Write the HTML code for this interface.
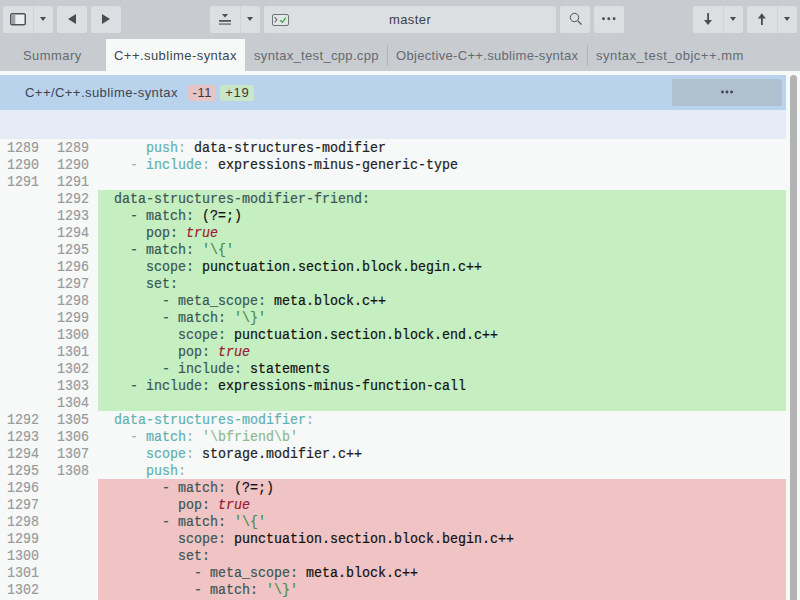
<!DOCTYPE html>
<html><head><meta charset="utf-8">
<style>
*{margin:0;padding:0;box-sizing:border-box}
html,body{width:800px;height:600px;overflow:hidden;background:#c8ccd0;font-family:"Liberation Sans",sans-serif}
.a{position:absolute}
.btn{position:absolute;top:6px;height:27px;background:#dcdfe2;border-radius:2px}
.sep{position:absolute;top:0;width:1px;height:27px;background:#d0d4d7}
.tri{position:absolute;width:0;height:0;border-left:3px solid transparent;border-right:3px solid transparent;border-top:4px solid #4a4d50}
.tab{position:absolute;top:40px;height:32px;font-size:13px;line-height:32px;color:#646a72;white-space:nowrap}
.tsep{position:absolute;top:45px;width:1px;height:21px;background:#aeb3b8}
#content{position:absolute;left:0;top:71px;width:800px;height:529px;background:#f7f9f9}
.code{position:absolute;left:0;width:786px;height:17px;font-family:"Liberation Mono",monospace;font-size:13.333px;line-height:17px;white-space:pre;-webkit-text-stroke:0.2px currentColor}
.ln1{position:absolute;left:7px;top:0;color:#9a9a9a;transform-origin:0 12px;transform:translateY(1px) scaleY(1.1)}
.ln2{position:absolute;left:57px;top:0;color:#9a9a9a;transform-origin:0 12px;transform:translateY(1px) scaleY(1.1)}
.tx{position:absolute;left:114px;top:0;color:#222;transform-origin:0 12px;transform:translateY(1px) scaleY(1.1)}
.bgG{position:absolute;left:98px;width:688px;background:#c6efc1}
.bgR{position:absolute;left:98px;width:688px;background:#f0c4c4}
/* context colours */
.k{color:#62b1b1}
.p{color:#93b5b5}
.s{color:#8fba8f}
.v{color:#222}
/* changed colours */
.K{color:#3a5757}
.S{color:#4f8c4c}
.T{color:#9a1a2e;font-style:italic}
.V{color:#111}
</style></head><body>

<!-- toolbar -->
<div class="btn" style="left:3px;width:50px">
  <div class="sep" style="left:30px"></div>
  <svg class="a" style="left:0;top:0" width="30" height="27"><rect x="7.75" y="7.75" width="14.5" height="11" rx="1.5" fill="#eceef0" stroke="#4f5256" stroke-width="1.5"/><rect x="8.5" y="8.5" width="3.8" height="9.5" fill="#9da1a6"/></svg>
  <div class="tri" style="left:37px;top:11px"></div>
</div>
<div class="btn" style="left:57px;width:30px">
  <svg class="a" style="left:0;top:0" width="30" height="27"><path d="M11 13 L19 8 L19 18 Z" fill="#4a4d50"/></svg>
</div>
<div class="btn" style="left:91px;width:30px">
  <svg class="a" style="left:0;top:0" width="30" height="27"><path d="M19 13 L11 8 L11 18 Z" fill="#4a4d50"/></svg>
</div>

<div class="btn" style="left:210px;width:50px">
  <div class="sep" style="left:30px"></div>
  <svg class="a" style="left:0;top:0" width="30" height="27"><path d="M12 8 L18 8 L15 11.4 Z" fill="#4a4d50"/><rect x="9" y="14" width="12" height="1.8" fill="#545658"/><rect x="9" y="17.2" width="12" height="1.8" fill="#87898c"/></svg>
  <div class="tri" style="left:37px;top:11px"></div>
</div>

<div class="btn" style="left:264px;width:292px">
  <div class="a" style="left:8px;top:8px;width:17px;height:12px;border:1px solid #6f7479;border-radius:2px;background:#e2e5e7"></div>
  <svg class="a" style="left:8px;top:8px" width="17" height="12"><path d="M2.6 3.2 L4.8 5.8 L2.6 8.4" stroke="#6a6e72" stroke-width="1.1" fill="none"/><path d="M8.2 6.2 L10.4 8.3 L13.8 3.6" stroke="#45a94b" stroke-width="1.4" fill="none"/></svg>
  <div class="a" style="left:125px;top:0;height:27px;line-height:27px;font-size:13px;color:#3c4148;letter-spacing:0.4px">master</div>
</div>
<div class="btn" style="left:560px;width:30px">
  <svg class="a" style="left:0;top:0" width="30" height="27"><circle cx="14.5" cy="11.5" r="4.2" stroke="#4f5256" stroke-width="1" fill="none"/><path d="M17.6 14.6 L21.5 18.5" stroke="#4f5256" stroke-width="1.2"/></svg>
</div>
<div class="btn" style="left:594px;width:30px">
  <svg class="a" style="left:0;top:0" width="30" height="27"><circle cx="9.5" cy="12.8" r="1.45" fill="#4a4d50"/><circle cx="14.8" cy="12.8" r="1.45" fill="#4a4d50"/><circle cx="20.1" cy="12.8" r="1.45" fill="#4a4d50"/></svg>
</div>

<div class="btn" style="left:693px;width:50px">
  <div class="sep" style="left:30px"></div>
  <svg class="a" style="left:0;top:0" width="30" height="27"><rect x="14.2" y="7" width="1.8" height="8" fill="#4a4d50"/><path d="M11 14 L19 14 L15 19 Z" fill="#4a4d50"/></svg>
  <div class="tri" style="left:37px;top:11px"></div>
</div>
<div class="btn" style="left:747px;width:50px">
  <div class="sep" style="left:30px"></div>
  <svg class="a" style="left:0;top:0" width="30" height="27"><rect x="14" y="12" width="1.8" height="7" fill="#4a4d50"/><path d="M10.8 12.5 L18.8 12.5 L14.8 7.3 Z" fill="#4a4d50"/></svg>
  <div class="tri" style="left:37px;top:11px"></div>
</div>

<!-- tabs -->
<div class="tab" style="left:23px;letter-spacing:0.42px">Summary</div>
<div class="a" style="left:106px;top:39px;width:139px;height:36px;background:#f7f9f9"></div>
<div class="tab" style="left:114px;color:#3e4650;letter-spacing:0.45px">C++.sublime-syntax</div>
<div class="tab" style="left:254px;letter-spacing:0.33px">syntax_test_cpp.cpp</div>
<div class="tsep" style="left:387px"></div>
<div class="tab" style="left:396px;letter-spacing:0.32px">Objective-C++.sublime-syntax</div>
<div class="tsep" style="left:587px"></div>
<div class="tab" style="left:596px;letter-spacing:0.5px">syntax_test_objc++.mm</div>

<!-- content -->
<div id="content"></div>
<div class="a" style="left:0;top:75px;width:786px;height:35px;background:#bad3ec"></div>
<div class="a" style="left:25px;top:75px;height:35px;line-height:35px;font-size:13px;color:#3a4550;letter-spacing:0.45px;white-space:nowrap">C++/C++.sublime-syntax</div>
<div class="a" style="left:188px;top:85px;width:28px;height:16px;background:#e6c4c7;border-radius:3px;font-size:13px;line-height:16px;text-align:center;color:#3a3a3a;letter-spacing:0.5px;text-indent:0.5px">-11</div>
<div class="a" style="left:220px;top:85px;width:34px;height:16px;background:#c9e6c7;border-radius:3px;font-size:13px;line-height:16px;text-align:center;color:#3a3a3a;letter-spacing:0.6px;text-indent:0.6px">+19</div>
<div class="a" style="left:672px;top:79px;width:110px;height:27px;background:#b1c0cf;border-radius:2px">
  <svg class="a" style="left:0;top:0" width="110" height="27"><circle cx="50.5" cy="13" r="1.4" fill="#3d4450"/><circle cx="55" cy="13" r="1.4" fill="#3d4450"/><circle cx="59.5" cy="13" r="1.4" fill="#3d4450"/></svg>
</div>
<div class="a" style="left:0;top:110px;width:786px;height:29px;background:#e5ecf6"></div>
<div class="a" style="left:790px;top:75px;width:7px;height:540px;background:#b3b3b3;border-radius:3.5px"></div>

<div class="bgG" style="top:190px;height:221px"></div>
<div class="bgR" style="top:479px;height:121px"></div>
<div class="code" style="top:139px"><span class="ln1">1289</span><span class="ln2">1289</span><span class="tx">    <span class="k">push</span><span class="p">:</span> <span class="v">data-structures-modifier</span></span></div>
<div class="code" style="top:156px"><span class="ln1">1290</span><span class="ln2">1290</span><span class="tx">  <span class="p">- </span><span class="k">include</span><span class="p">:</span> <span class="v">expressions-minus-generic-type</span></span></div>
<div class="code" style="top:173px"><span class="ln1">1291</span><span class="ln2">1291</span><span class="tx"></span></div>
<div class="code" style="top:190px"><span class="ln2">1292</span><span class="tx"><span class="K">data-structures-modifier-friend</span><span class="K">:</span></span></div>
<div class="code" style="top:207px"><span class="ln2">1293</span><span class="tx">  <span class="K">- </span><span class="K">match</span><span class="K">:</span> <span class="V">(?=;)</span></span></div>
<div class="code" style="top:224px"><span class="ln2">1294</span><span class="tx">    <span class="K">pop</span><span class="K">:</span> <span class="T">true</span></span></div>
<div class="code" style="top:241px"><span class="ln2">1295</span><span class="tx">  <span class="K">- </span><span class="K">match</span><span class="K">:</span> <span class="S">&#x27;\{&#x27;</span></span></div>
<div class="code" style="top:258px"><span class="ln2">1296</span><span class="tx">    <span class="K">scope</span><span class="K">:</span> <span class="V">punctuation.section.block.begin.c++</span></span></div>
<div class="code" style="top:275px"><span class="ln2">1297</span><span class="tx">    <span class="K">set</span><span class="K">:</span></span></div>
<div class="code" style="top:292px"><span class="ln2">1298</span><span class="tx">      <span class="K">- </span><span class="K">meta_scope</span><span class="K">:</span> <span class="V">meta.block.c++</span></span></div>
<div class="code" style="top:309px"><span class="ln2">1299</span><span class="tx">      <span class="K">- </span><span class="K">match</span><span class="K">:</span> <span class="S">&#x27;\}&#x27;</span></span></div>
<div class="code" style="top:326px"><span class="ln2">1300</span><span class="tx">        <span class="K">scope</span><span class="K">:</span> <span class="V">punctuation.section.block.end.c++</span></span></div>
<div class="code" style="top:343px"><span class="ln2">1301</span><span class="tx">        <span class="K">pop</span><span class="K">:</span> <span class="T">true</span></span></div>
<div class="code" style="top:360px"><span class="ln2">1302</span><span class="tx">      <span class="K">- </span><span class="K">include</span><span class="K">:</span> <span class="V">statements</span></span></div>
<div class="code" style="top:377px"><span class="ln2">1303</span><span class="tx">  <span class="K">- </span><span class="K">include</span><span class="K">:</span> <span class="V">expressions-minus-function-call</span></span></div>
<div class="code" style="top:394px"><span class="ln2">1304</span><span class="tx"></span></div>
<div class="code" style="top:411px"><span class="ln1">1292</span><span class="ln2">1305</span><span class="tx"><span class="k">data-structures-modifier</span><span class="p">:</span></span></div>
<div class="code" style="top:428px"><span class="ln1">1293</span><span class="ln2">1306</span><span class="tx">  <span class="p">- </span><span class="k">match</span><span class="p">:</span> <span class="s">&#x27;\bfriend\b&#x27;</span></span></div>
<div class="code" style="top:445px"><span class="ln1">1294</span><span class="ln2">1307</span><span class="tx">    <span class="k">scope</span><span class="p">:</span> <span class="v">storage.modifier.c++</span></span></div>
<div class="code" style="top:462px"><span class="ln1">1295</span><span class="ln2">1308</span><span class="tx">    <span class="k">push</span><span class="p">:</span></span></div>
<div class="code" style="top:479px"><span class="ln1">1296</span><span class="tx">      <span class="K">- </span><span class="K">match</span><span class="K">:</span> <span class="V">(?=;)</span></span></div>
<div class="code" style="top:496px"><span class="ln1">1297</span><span class="tx">        <span class="K">pop</span><span class="K">:</span> <span class="T">true</span></span></div>
<div class="code" style="top:513px"><span class="ln1">1298</span><span class="tx">      <span class="K">- </span><span class="K">match</span><span class="K">:</span> <span class="S">&#x27;\{&#x27;</span></span></div>
<div class="code" style="top:530px"><span class="ln1">1299</span><span class="tx">        <span class="K">scope</span><span class="K">:</span> <span class="V">punctuation.section.block.begin.c++</span></span></div>
<div class="code" style="top:547px"><span class="ln1">1300</span><span class="tx">        <span class="K">set</span><span class="K">:</span></span></div>
<div class="code" style="top:564px"><span class="ln1">1301</span><span class="tx">          <span class="K">- </span><span class="K">meta_scope</span><span class="K">:</span> <span class="V">meta.block.c++</span></span></div>
<div class="code" style="top:581px"><span class="ln1">1302</span><span class="tx">          <span class="K">- </span><span class="K">match</span><span class="K">:</span> <span class="S">&#x27;\}&#x27;</span></span></div>

</body></html>
